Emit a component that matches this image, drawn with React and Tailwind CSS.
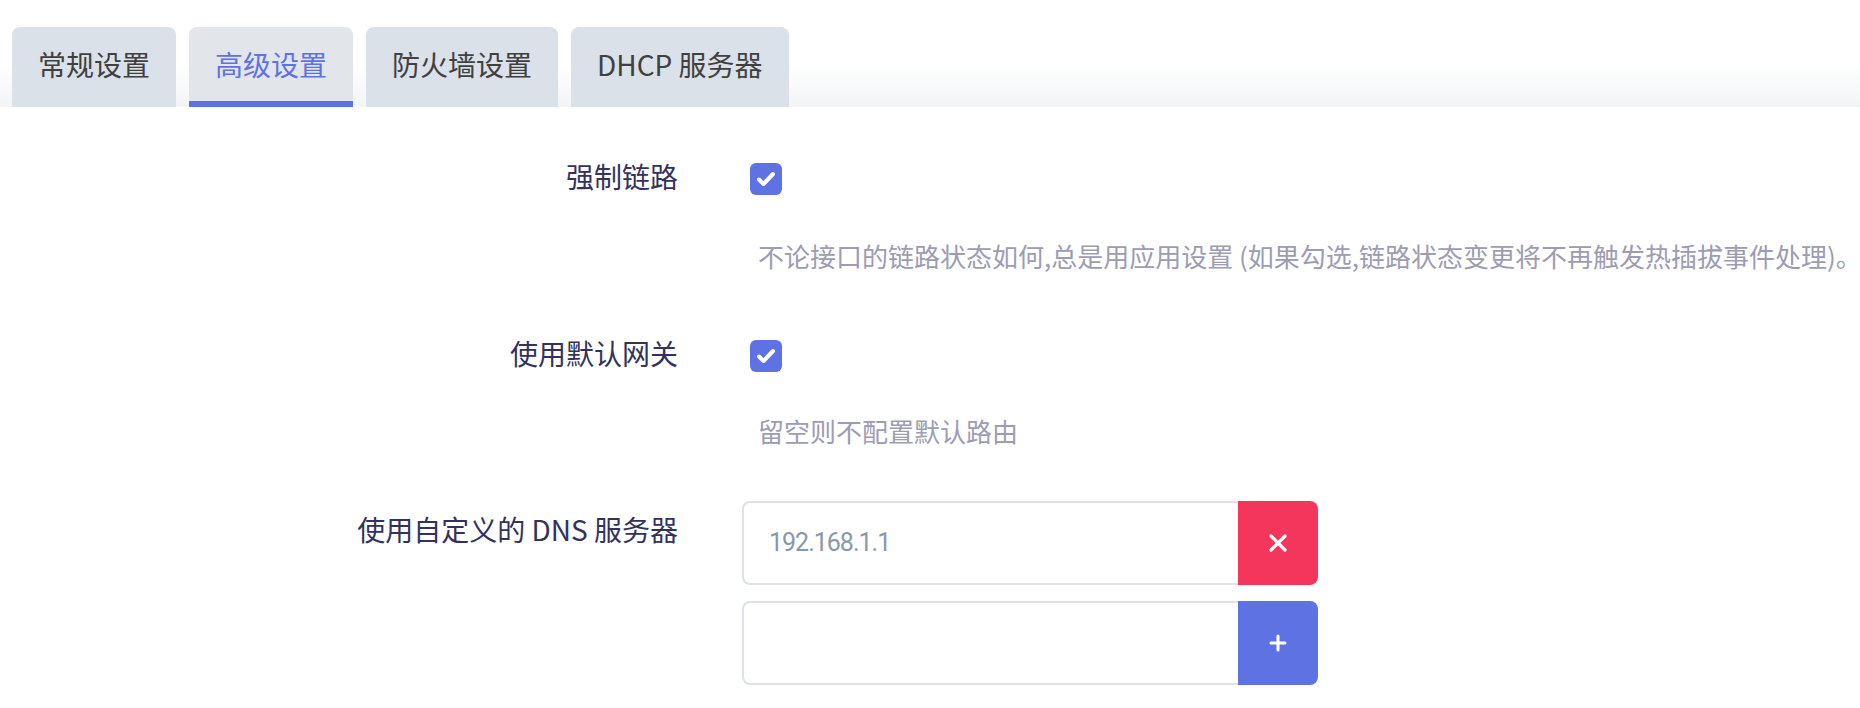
import React from 'react';
import { X, Plus } from 'lucide-react';

const tabs = ['常规设置', '高级设置', '防火墙设置', 'DHCP 服务器'];

const font = { fontFamily: '"Liberation Sans Narrow", "Noto Sans CJK SC", sans-serif' };

function Checkbox() {
  return (
    <span className="flex h-[32px] w-[32px] items-center justify-center rounded-[6px] bg-[#5e72e4]">
      <svg width="32" height="32" viewBox="0 0 32 32" fill="none">
        <path d="M9 16.5l4.5 4.5 9.5-10" stroke="#fff" strokeWidth="4" strokeLinecap="round" strokeLinejoin="round" />
      </svg>
    </span>
  );
}

function CheckRow({ label, help, top, helpTop }) {
  return (
    <div className="flex" style={{ marginTop: top }}>
      <div className="w-[678px] shrink-0 text-right text-[28px] leading-[40px] text-[#32325d]">{label}</div>
      <div className="ml-[64px]">
        <div className="h-[40px] pl-[8px] pt-[7px]">
          <Checkbox />
        </div>
        <p className="whitespace-nowrap pl-[16px] text-[26px] leading-[39px] text-[#9c9cb2]" style={{ marginTop: helpTop }}>
          {help}
        </p>
      </div>
    </div>
  );
}

function DnsInput({ value, danger }) {
  return (
    <div className="flex h-[84px] w-[576px]">
      <div className="flex flex-1 items-center rounded-l-[8px] border-2 border-r-0 border-[#dee2e7] bg-white pl-[25px] font-['Roboto'] text-[25px] tracking-[-1px] text-[#8898aa]">
        {value}
      </div>
      <button
        className={`flex w-[80px] items-center justify-center rounded-r-[8px] text-white ${danger ? 'bg-[#f5365c]' : 'bg-[#5e72e4]'}`}
      >
        {danger ? <X size={28} strokeWidth={2.8} /> : <Plus size={24} strokeWidth={3} />}
      </button>
    </div>
  );
}

export default function App() {
  return (
    <div className="min-h-[708px] bg-white" style={font}>
      {/* tab strip */}
      <div className="flex h-[107px] items-end gap-[13px] bg-linear-to-b from-white from-60% to-[#f2f4f6] pl-[12px]">
        {tabs.map((t, i) => (
          <div
            key={t}
            className={`flex h-[80px] items-center rounded-t-[8px] border-b-[6px] px-[26px] text-[28px] ${
              i === 1
                ? 'border-[#5e72e4] bg-[#e2e6eb] text-[#5e72e4]'
                : 'border-transparent bg-[#dbe1e8] text-[#404040]'
            }`}
          >
            {t}
          </div>
        ))}
      </div>

      <CheckRow
        label="强制链路"
        help="不论接口的链路状态如何,总是用应用设置 (如果勾选,链路状态变更将不再触发热插拔事件处理)。"
        top={49}
        helpTop={40}
      />
      <CheckRow label="使用默认网关" help="留空则不配置默认路由" top={58} helpTop={38} />

      <div className="mt-[51px] flex">
        <div className="w-[678px] shrink-0 pt-[8px] text-right text-[28px] leading-[40px] text-[#32325d]">
          使用自定义的 DNS 服务器
        </div>
        <div className="ml-[64px] flex flex-col gap-[16px]">
          <DnsInput value="192.168.1.1" danger />
          <DnsInput value="" />
        </div>
      </div>
    </div>
  );
}
